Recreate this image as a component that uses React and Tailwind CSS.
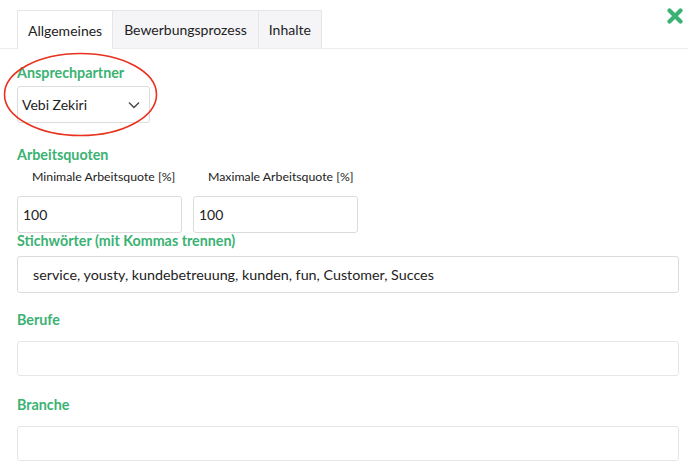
export default function App() {
  const label = "block text-[14.3px] leading-4 font-bold text-[#3bb273]";
  const box = "border border-[#dcdcdc] rounded-[3px] bg-white text-[#222] flex items-center";

  return (
    <div className="relative w-[688px] h-[466px] overflow-hidden bg-white font-['Lato',sans-serif]">
      {/* tabs */}
      <div className="mt-[10px] h-[39px] flex border-b border-[#ececec] pl-[17px]">
        <div className="h-[39px] px-[10px] flex items-center bg-white border border-b-0 border-[#e6e6e6] text-[14px] text-[#222]">
          Allgemeines
        </div>
        <div className="h-[38px] px-[11px] flex items-center bg-[#f5f5f8] border-r border-t border-[#e6e6e6] text-[14px] text-[#222]">
          Bewerbungsprozess
        </div>
        <div className="h-[38px] px-[10px] flex items-center bg-[#f5f5f8] border-r border-t border-[#e6e6e6] text-[14px] text-[#222]">
          Inhalte
        </div>
      </div>

      <svg className="absolute right-[5px] top-[8px]" width="16" height="16" viewBox="0 0 16 16">
        <path d="M2.5 2.5 L13.5 13.5 M13.5 2.5 L2.5 13.5" stroke="#3bb273" strokeWidth="4.2" strokeLinecap="round" />
      </svg>

      <div className="px-[17px] pr-[9px]">
        <span className={`${label} mt-[16px]`}>Ansprechpartner</span>
        <div className={`${box} mt-[5px] w-[133px] h-[37px] pl-[4px] pr-[9px] justify-between text-[14px]`}>
          <span>Vebi Zekiri</span>
          <svg width="12" height="8" viewBox="0 0 12 8">
            <path d="M1 1.5 L6 6.5 L11 1.5" fill="none" stroke="#444" strokeWidth="1.3" />
          </svg>
        </div>

        <span className={`${label} mt-[24px]`}>Arbeitsquoten</span>
        <div className="flex gap-[11px] mt-[7px]">
          <div className="w-[165px]">
            <div className="text-[12.3px] leading-[14px] text-[#222] pl-[15px]">Minimale Arbeitsquote [%]</div>
            <div className={`${box} mt-[12px] h-[37px] pl-[5px] text-[14px]`}>100</div>
          </div>
          <div className="w-[165px]">
            <div className="text-[12.3px] leading-[14px] text-[#222] pl-[15px]">Maximale Arbeitsquote [%]</div>
            <div className={`${box} mt-[12px] h-[37px] pl-[5px] text-[14px]`}>100</div>
          </div>
        </div>

        <span className={label}>Stichwörter (mit Kommas trennen)</span>
        <div className={`${box} mt-[7px] h-[37px] pl-[15px] text-[14.3px]`}>
          service, yousty, kundebetreuung, kunden, fun, Customer, Succes
        </div>

        <span className={`${label} mt-[19px]`}>Berufe</span>
        <div className={`${box} mt-[13px] h-[35px] border-[#e6e6e6]`} />

        <span className={`${label} mt-[21px]`}>Branche</span>
        <div className={`${box} mt-[13px] h-[35px] border-[#e6e6e6]`} />
      </div>

      <svg className="absolute left-0 top-0 pointer-events-none" width="200" height="150">
        <ellipse cx="80.5" cy="94.5" rx="76" ry="41" fill="none" stroke="#e8321e" strokeWidth="1.6" />
      </svg>
    </div>
  );
}
